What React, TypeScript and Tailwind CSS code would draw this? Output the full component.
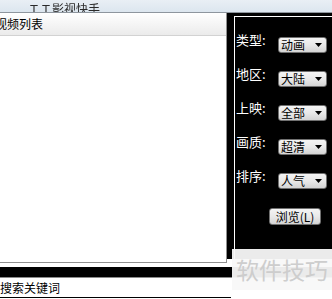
import React from 'react'

const rows = [
  { label: '类型', value: '动画' },
  { label: '地区', value: '大陆' },
  { label: '上映', value: '全部' },
  { label: '画质', value: '超清' },
  { label: '排序', value: '人气' },
]

function Combo({ value }: { value: string }) {
  return (
    <div className="flex items-center justify-between w-[49px] h-[16px] rounded-[3px] border border-[#707070] bg-linear-to-b from-[#f4f4f4] via-[#e9e9e9] to-[#d4d4d4] pl-[2px] pr-[4px] text-[12px] leading-[14px] text-black">
      <span>{value}</span>
      <svg width="7" height="4" viewBox="0 0 7 4">
        <path d="M0 0 H7 L3.5 4 Z" fill="#000" />
      </svg>
    </div>
  )
}

export default function App() {
  return (
    <div className="relative w-[332px] h-[299px] overflow-hidden bg-white font-['Noto_Sans_CJK_SC',sans-serif] text-black">
      {/* title bar */}
      <div className="h-[13px] border-b border-[#8e969e] bg-linear-to-b from-[#e9eff5] to-[#dce6ef] flex items-end overflow-hidden">
        <span className="ml-[28px] -mb-[3px] text-[12px] leading-[12px] text-[#2a2a2a] blur-[0.5px]">ＴＴ影视快手</span>
      </div>

      <div className="flex h-[250px]">
        {/* video list */}
        <div className="w-[227px] flex flex-col border-r border-b border-[#8f8f8f]">
          <div className="h-[23px] flex items-center border-b border-[#d2d2d2] bg-linear-to-b from-white to-[#ebebeb] overflow-hidden">
            <span className="-ml-[5px] text-[12px] leading-[12px] whitespace-nowrap">视频列表</span>
          </div>
          <div className="flex-1 bg-white" />
        </div>

        {/* filter panel */}
        <div className="flex-1 flex flex-col">
          <div className="h-[246px] bg-black pl-[7px] pt-[3px]">
            <div className="h-full border-l border-t border-white pl-[1px] pt-[16px]">
              <div className="flex flex-col gap-[14px]">
                {rows.map((r) => (
                  <div key={r.label} className="flex items-start">
                    <span className="w-[42px] text-[13px] leading-[13px] text-white whitespace-nowrap">{r.label}:</span>
                    <div className="mt-[4px]">
                      <Combo value={r.value} />
                    </div>
                  </div>
                ))}
              </div>
              <button className="mt-[19px] ml-[33px] w-[52px] h-[17px] rounded-[3px] border border-[#707070] bg-linear-to-b from-[#f4f4f4] via-[#e9e9e9] to-[#d4d4d4] text-[12px] leading-[14px] text-black">
                浏览(L)
              </button>
            </div>
          </div>
        </div>
      </div>

      <div className="h-[4px]" />
      <div className="h-[10px] bg-black" />
      <div className="h-px bg-[#8a8a8a]" />
      <div className="w-[231px] h-[20px] border-b border-black flex items-center">
        <span className="text-[12px] leading-[12px] whitespace-nowrap">搜索关键词</span>
      </div>

      {/* watermark */}
      <div className="absolute left-[232px] top-[249px] w-[100px] h-[41px] bg-[#f8f8f8]/95 flex items-center justify-center">
        <span className="text-[23px] leading-[23px] text-[#cdcdcd] whitespace-nowrap">软件技巧</span>
      </div>
    </div>
  )
}
